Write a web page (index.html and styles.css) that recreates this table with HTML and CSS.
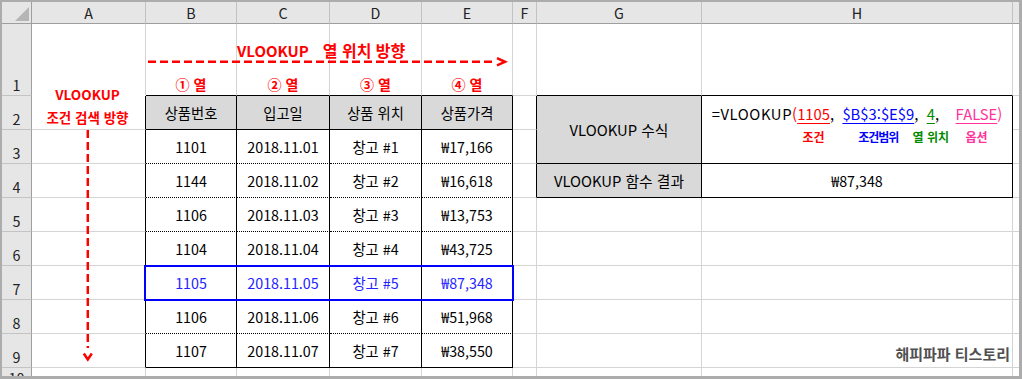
FILE: index.html
```html
<!DOCTYPE html>
<html lang="ko">
<head>
<meta charset="utf-8">
<title>VLOOKUP</title>
<link rel="stylesheet" href="styles.css">
</head>
<body>
<div class="frame">
  <div class="wrap">
    <div class="sheet">
      <div class="corner"><span class="tri"></span></div>
      <div class="ch">A</div><div class="ch">B</div><div class="ch">C</div><div class="ch">D</div><div class="ch">E</div><div class="ch">F</div><div class="ch">G</div><div class="ch">H</div><div class="ch ch-end"></div>

      <div class="rh">1</div>
      <div class="c merge-top"></div>
      <div class="c col-label bt">① 열</div>
      <div class="c col-label bt">② 열</div>
      <div class="c col-label bt">③ 열</div>
      <div class="c col-label bt">④ 열</div>
      <div class="c"></div>
      <div class="c bt"></div>
      <div class="c bt"></div>
      <div class="c end"></div>

      <div class="rh">2</div>
      <div class="c bl"></div>
      <div class="c th">상품번호</div>
      <div class="c th">입고일</div>
      <div class="c th">상품 위치</div>
      <div class="c th">상품가격</div>
      <div class="c bl"></div>
      <div class="c box gray wide g23">VLOOKUP 수식</div>
      <div class="c box h23">
        <div class="fx">
          <span class="fp">=VLOOKUP</span><span class="fp red">(</span>
          <span class="arg"><span class="val red">1105</span><span class="tag red">조건</span></span>
          <span class="fp">,  </span>
          <span class="arg"><span class="val blue">$B$3:$E$9</span><span class="tag blue narrow">조건범위</span></span>
          <span class="fp">,  </span>
          <span class="arg"><span class="val green">4</span><span class="tag green">열 위치</span></span>
          <span class="fp">,    </span>
          <span class="arg"><span class="val pink">FALSE</span><span class="tag pink">옵션</span></span>
          <span class="fp pink">)</span>
        </div>
      </div>
      <div class="c end"></div>

      <div class="rh">3</div>
      <div class="c bl"></div>
      <div class="c t">1101</div><div class="c t">2018.11.01</div><div class="c t">창고 #1</div><div class="c t">₩17,166</div>
      <div class="c bl"></div>
      <div class="c end"></div>

      <div class="rh">4</div>
      <div class="c bl"></div>
      <div class="c t">1144</div><div class="c t">2018.11.02</div><div class="c t">창고 #2</div><div class="c t">₩16,618</div>
      <div class="c bl"></div>
      <div class="c box gray wide">VLOOKUP 함수 결과</div>
      <div class="c box">₩87,348</div>
      <div class="c end"></div>

      <div class="rh">5</div>
      <div class="c bl"></div>
      <div class="c t">1106</div><div class="c t">2018.11.03</div><div class="c t">창고 #3</div><div class="c t">₩13,753</div>
      <div class="c"></div><div class="c"></div><div class="c"></div><div class="c end"></div>

      <div class="rh">6</div>
      <div class="c bl"></div>
      <div class="c t">1104</div><div class="c t">2018.11.04</div><div class="c t">창고 #4</div><div class="c t">₩43,725</div>
      <div class="c"></div><div class="c"></div><div class="c"></div><div class="c end"></div>

      <div class="rh">7</div>
      <div class="c bl"></div>
      <div class="c t hl">1105</div><div class="c t hl">2018.11.05</div><div class="c t hl">창고 #5</div><div class="c t hl">₩87,348</div>
      <div class="c"></div><div class="c"></div><div class="c"></div><div class="c end"></div>

      <div class="rh">8</div>
      <div class="c bl"></div>
      <div class="c t">1106</div><div class="c t">2018.11.06</div><div class="c t">창고 #6</div><div class="c t">₩51,968</div>
      <div class="c"></div><div class="c"></div><div class="c"></div><div class="c end"></div>

      <div class="rh">9</div>
      <div class="c bl"></div>
      <div class="c t last">1107</div><div class="c t last">2018.11.07</div><div class="c t last">창고 #7</div><div class="c t last">₩38,550</div>
      <div class="c"></div><div class="c"></div><div class="c mark">해피파파 티스토리</div><div class="c end"></div>

      <div class="rh rh-cut">10</div>
      <div class="c r10"></div><div class="c r10"></div><div class="c r10"></div><div class="c r10"></div><div class="c r10"></div><div class="c r10"></div><div class="c r10"></div><div class="c r10"></div><div class="c r10 end"></div>
    </div>

    <div class="over">
      <div class="title">VLOOKUP<span class="title-ko">열 위치 방향</span></div>
      <svg class="harrow" width="367" height="16" viewBox="0 0 367 16">
        <line x1="2" y1="7.8" x2="349" y2="7.8" stroke="#ff0000" stroke-width="2.5" stroke-dasharray="8 4"/>
        <polyline points="351,4.2 359,7.8 351,11.4" fill="none" stroke="#ff0000" stroke-width="2.5"/>
      </svg>
      <div class="vtext">VLOOKUP<br>조건 검색 방향</div>
      <svg class="varrow" width="114" height="238" viewBox="0 0 114 238">
        <line x1="55.8" y1="0" x2="55.8" y2="218" stroke="#ff0000" stroke-width="2.5" stroke-dasharray="8 4"/>
        <polyline points="51.8,223.5 55.8,229.5 59.8,223.5" fill="none" stroke="#ff0000" stroke-width="2.5"/>
      </svg>
      <div class="hlbox"></div>
    </div>
  </div>
</div>
</body>
</html>
```

FILE: styles.css
```css
* { box-sizing: border-box; }

body {
  margin: 0;
  font-family: "Noto Sans CJK KR", "Noto Sans", sans-serif;
  font-size: 14.3px;
  color: #000;
}

.frame {
  width: 1022px;
  height: 379px;
  background: #acacac;
  padding: 2px 3px 3px 2px;
  overflow: hidden;
}

.wrap {
  position: relative;
  width: 1017px;
  height: 374px;
  overflow: hidden;
  background: #fff;
}

.sheet,
.over {
  display: grid;
  grid-template-columns: 30px 114px 91px 93px 92px 91px 24px 165px 311px 6px;
  grid-template-rows: 22px 72px repeat(8, 34px) 8px;
}

.over {
  position: absolute;
  inset: 0;
  pointer-events: none;
}

.sheet > div {
  display: flex;
  align-items: center;
  justify-content: center;
  overflow: hidden;
  white-space: nowrap;
  min-width: 0;
  min-height: 0;
}

.c {
  border-right: 1px solid #d4d4d4;
  border-bottom: 1px solid #d4d4d4;
}

.ch {
  background: #e6e6e6;
  border-right: 1px solid #c2c2c2;
  border-bottom: 1px solid #9e9e9e;
  color: #222;
  line-height: 20px;
}

.ch-end { border-right: none; }

.sheet > .corner {
  background: #e6e6e6;
  border-right: 1px solid #9e9e9e;
  border-bottom: 1px solid #9e9e9e;
  justify-content: flex-end;
  align-items: flex-end;
  padding: 0 2px 2px 0;
}

.tri {
  width: 14px;
  height: 14px;
  background: #b5b5b5;
  clip-path: polygon(100% 0, 100% 100%, 0 100%);
}

.sheet > .rh {
  background: #e6e6e6;
  border-right: 1px solid #9e9e9e;
  border-bottom: 1px solid #c4c4c4;
  color: #222;
  align-items: flex-end;
  line-height: 20px;
}

.sheet > .rh-cut {
  align-items: flex-start;
  border-bottom: none;
}

.end { border-right: none; }
.r10 { border-bottom: none; }
.merge-top { border-bottom-color: transparent; }
.bt { border-bottom-color: #000; }
.bl { border-right-color: #000; }

.th {
  background: #d9d9d9;
  border-right-color: #000;
  border-bottom-color: #000;
}

.t {
  border-right-color: #000;
  border-bottom: 1px dotted #000;
}

.t.last { border-bottom: 1px solid #000; }

.hl { color: #2323ff; }

.sheet > .col-label {
  align-items: flex-end;
  color: #ff0000;
  font-weight: 700;
  font-size: 14px;
  line-height: 20px;
  padding-bottom: 1px;
}

.box {
  border-right-color: #000;
  border-bottom-color: #000;
}

.gray { background: #d9d9d9; }

.wide { font-size: 14.8px; }

.g23 {
  grid-column: 8;
  grid-row: 3 / 5;
}

.sheet > .h23 {
  grid-column: 9;
  grid-row: 3 / 5;
  align-items: flex-start;
  padding-top: 8px;
}

.fx {
  display: flex;
  align-items: flex-start;
  font-size: 14.8px;
}

.fp {
  white-space: pre;
  line-height: 20px;
}

.fp:first-child { letter-spacing: 0.6px; }

.arg {
  display: flex;
  flex-direction: column;
  align-items: center;
}

.val {
  line-height: 20px;
  text-decoration: underline;
  text-decoration-thickness: 1px;
  text-underline-offset: 3px;
}

.tag {
  width: 0;
  display: flex;
  justify-content: center;
  white-space: nowrap;
  font-weight: 700;
  font-size: 12px;
  line-height: 17px;
  margin-top: 4px;
}

.narrow { letter-spacing: -1px; }

.red { color: #ff0000; }
.blue { color: #0000ff; }
.green { color: #008a00; }
.pink { color: #ff3399; }

.sheet > .mark {
  justify-content: flex-end;
  padding: 6px 2px 0 0;
  font-weight: 700;
  font-size: 15px;
  color: #505050;
}

.title {
  grid-column: 3 / 7;
  grid-row: 2;
  align-self: start;
  justify-self: start;
  margin: 16px 0 0 91px;
  color: #ff0000;
  font-weight: 700;
  font-size: 15px;
  line-height: 20px;
  white-space: nowrap;
}

.title-ko {
  font-size: 16px;
  margin-left: 14px;
}

.harrow {
  grid-column: 3 / 7;
  grid-row: 2;
  align-self: start;
  margin-top: 30px;
  display: block;
}

.vtext {
  grid-column: 2;
  grid-row: 2 / 4;
  align-self: end;
  text-align: center;
  color: #ff0000;
  font-weight: 700;
  font-size: 13.5px;
  line-height: 23px;
  padding: 0 3px 1px 0;
}

.varrow {
  grid-column: 2;
  grid-row: 4 / 11;
  align-self: start;
  display: block;
}

.hlbox {
  grid-column: 3 / 7;
  grid-row: 8;
  margin: -1px -1px -1px -2px;
  border: 2px solid #0000ff;
}
```
